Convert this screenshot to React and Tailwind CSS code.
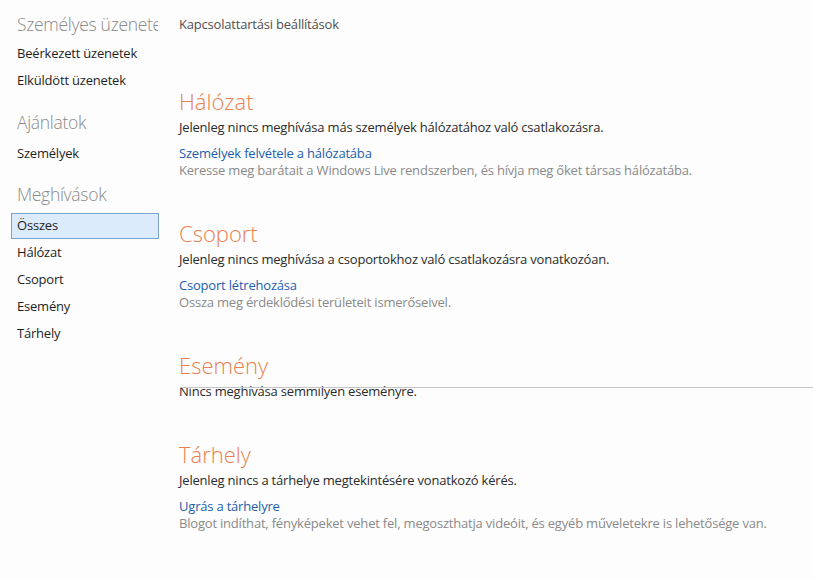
import React from "react";

const font = { fontFamily: '"Open Sans", "Noto Sans", sans-serif' };

function NavItem({ children, selected }) {
  return selected ? (
    <div className="mx-[11px] flex h-[26px] items-center border border-[#7da2ce] bg-[#dcebfc] pl-[5px] text-[13px] tracking-[-0.2px] text-[#1e1e1e]">
      {children}
    </div>
  ) : (
    <div className="flex h-[27px] items-center pl-[17px] text-[13px] tracking-[-0.2px] text-[#1e1e1e]">{children}</div>
  );
}

function SideHead({ children, className = "" }) {
  return (
    <div className={"whitespace-nowrap pl-[17px] text-[17.5px] font-light leading-[24px] tracking-[-0.3px] text-[#8a8a8a] " + className}>
      {children}
    </div>
  );
}

function Section({ title, text, link, desc, line }) {
  return (
    <div className="relative">
      <div className="text-[22px] font-light leading-[28px] text-[#e8804f]">{title}</div>
      <div className="mt-[3px] text-[13px] leading-[18px] tracking-[-0.2px] text-[#2b2b2b]">{text}</div>
      {link && (
        <>
          <div className="mt-[9px] text-[13px] leading-[17px] tracking-[-0.2px] text-[#1e5ead]">{link}</div>
          <div className="text-[13px] leading-[17px] tracking-[-0.2px] text-[#8a8a8a]">{desc}</div>
        </>
      )}
      {line && <div className="absolute left-px right-0 top-[36px] h-px bg-[#c4c4c4]" />}
    </div>
  );
}

export default function App() {
  return (
    <div style={font} className="flex h-[580px] w-[813px] overflow-hidden bg-[#fdfdfd]">
      <div className="w-[170px] shrink-0 overflow-hidden pt-[12px]">
        <div className="w-[158px] overflow-hidden">
          <SideHead>Személyes üzenetek</SideHead>
        </div>
        <div className="mt-[4px]">
          <NavItem>Beérkezett üzenetek</NavItem>
          <NavItem>Elküldött üzenetek</NavItem>
        </div>
        <SideHead className="mt-[16px]">Ajánlatok</SideHead>
        <div className="mt-[6px]">
          <NavItem>Személyek</NavItem>
        </div>
        <SideHead className="mt-[15px]">Meghívások</SideHead>
        <div className="mt-[7px]">
          <NavItem selected>Összes</NavItem>
          <NavItem>Hálózat</NavItem>
          <NavItem>Csoport</NavItem>
          <NavItem>Esemény</NavItem>
          <NavItem>Tárhely</NavItem>
        </div>
      </div>
      <div className="flex-1 pl-[9px] pt-[15px]">
        <div className="text-[13px] leading-[18px] tracking-[-0.2px] text-[#505050]">Kapcsolattartási beállítások</div>
        <div className="mt-[54px] flex flex-col gap-[40px]">
          <Section
            title="Hálózat"
            text="Jelenleg nincs meghívása más személyek hálózatához való csatlakozásra."
            link="Személyek felvétele a hálózatába"
            desc="Keresse meg barátait a Windows Live rendszerben, és hívja meg őket társas hálózatába."
          />
          <Section
            title="Csoport"
            text="Jelenleg nincs meghívása a csoportokhoz való csatlakozásra vonatkozóan."
            link="Csoport létrehozása"
            desc="Ossza meg érdeklődési területeit ismerőseivel."
          />
          <Section title="Esemény" text="Nincs meghívása semmilyen eseményre." line />
          <Section
            title="Tárhely"
            text="Jelenleg nincs a tárhelye megtekintésére vonatkozó kérés."
            link="Ugrás a tárhelyre"
            desc="Blogot indíthat, fényképeket vehet fel, megoszthatja videóit, és egyéb műveletekre is lehetősége van."
          />
        </div>
      </div>
    </div>
  );
}
